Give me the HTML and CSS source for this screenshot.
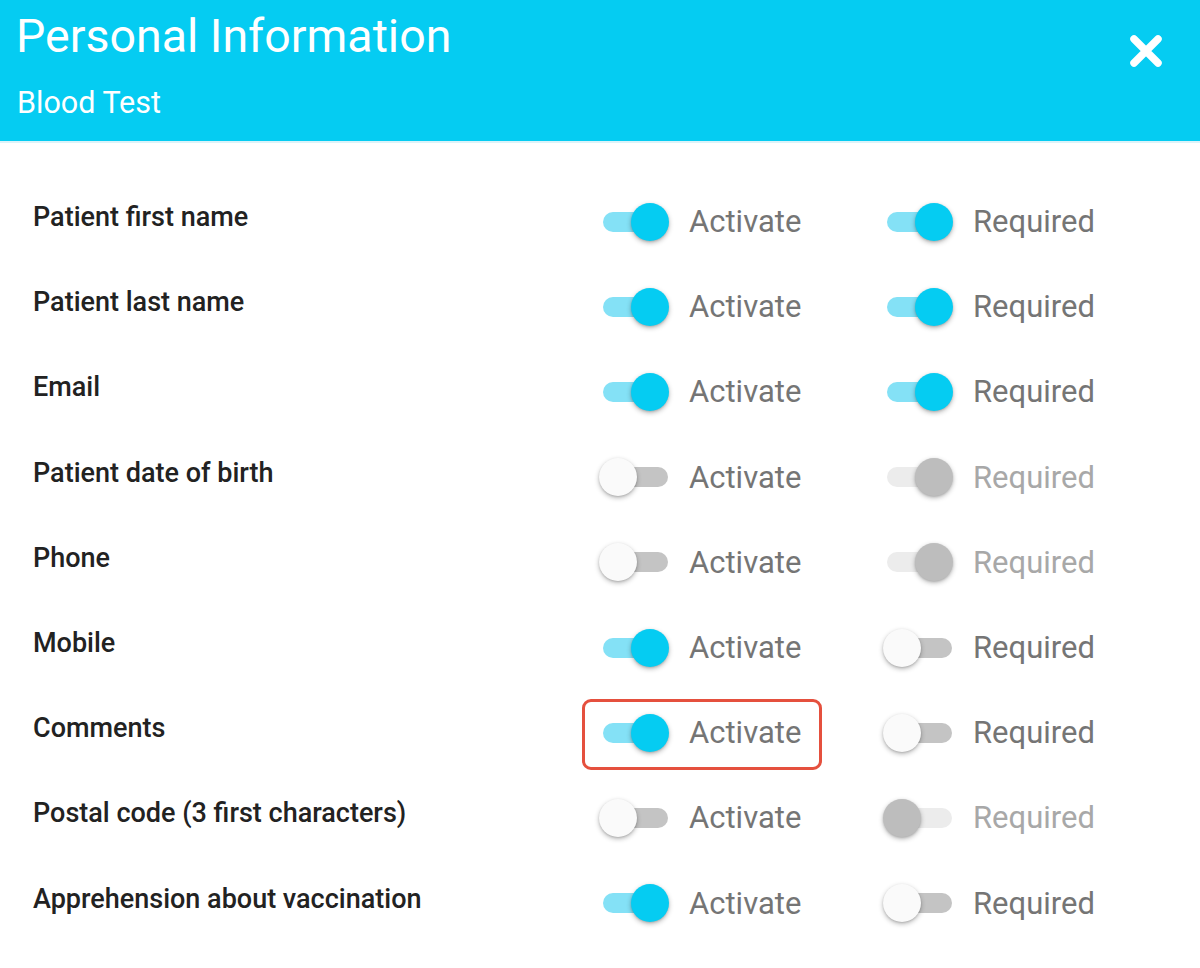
FILE: index.html
```html
<!DOCTYPE html>
<html>
<head>
<meta charset="utf-8">
<link rel="stylesheet" href="styles.css">
</head>
<body>
<header class="header">
  <div class="titles">
    <h1 class="title">Personal Information</h1>
    <div class="subtitle">Blood Test</div>
  </div>
  <button class="close" aria-label="Close">
    <svg width="34" height="34" viewBox="0 0 34 34"><path d="M5 5 L29 29 M29 5 L5 29" stroke="#fff" stroke-width="7.5" stroke-linecap="round"/></svg>
  </button>
</header>
<main class="list">
  <div class="row">
    <div class="label">Patient first name</div>
    <div class="opt"><span class="switch on"><span class="track"></span><span class="knob"></span></span><span class="opt-text">Activate</span></div>
    <div class="opt"><span class="switch on"><span class="track"></span><span class="knob"></span></span><span class="opt-text">Required</span></div>
  </div>
  <div class="row">
    <div class="label">Patient last name</div>
    <div class="opt"><span class="switch on"><span class="track"></span><span class="knob"></span></span><span class="opt-text">Activate</span></div>
    <div class="opt"><span class="switch on"><span class="track"></span><span class="knob"></span></span><span class="opt-text">Required</span></div>
  </div>
  <div class="row">
    <div class="label">Email</div>
    <div class="opt"><span class="switch on"><span class="track"></span><span class="knob"></span></span><span class="opt-text">Activate</span></div>
    <div class="opt"><span class="switch on"><span class="track"></span><span class="knob"></span></span><span class="opt-text">Required</span></div>
  </div>
  <div class="row">
    <div class="label">Patient date of birth</div>
    <div class="opt"><span class="switch"><span class="track"></span><span class="knob"></span></span><span class="opt-text">Activate</span></div>
    <div class="opt disabled"><span class="switch on"><span class="track"></span><span class="knob"></span></span><span class="opt-text">Required</span></div>
  </div>
  <div class="row">
    <div class="label">Phone</div>
    <div class="opt"><span class="switch"><span class="track"></span><span class="knob"></span></span><span class="opt-text">Activate</span></div>
    <div class="opt disabled"><span class="switch on"><span class="track"></span><span class="knob"></span></span><span class="opt-text">Required</span></div>
  </div>
  <div class="row">
    <div class="label">Mobile</div>
    <div class="opt"><span class="switch on"><span class="track"></span><span class="knob"></span></span><span class="opt-text">Activate</span></div>
    <div class="opt"><span class="switch"><span class="track"></span><span class="knob"></span></span><span class="opt-text">Required</span></div>
  </div>
  <div class="row">
    <div class="label">Comments</div>
    <div class="opt highlighted"><span class="switch on"><span class="track"></span><span class="knob"></span></span><span class="opt-text">Activate</span></div>
    <div class="opt"><span class="switch"><span class="track"></span><span class="knob"></span></span><span class="opt-text">Required</span></div>
  </div>
  <div class="row">
    <div class="label">Postal code (3 first characters)</div>
    <div class="opt"><span class="switch"><span class="track"></span><span class="knob"></span></span><span class="opt-text">Activate</span></div>
    <div class="opt disabled"><span class="switch"><span class="track"></span><span class="knob"></span></span><span class="opt-text">Required</span></div>
  </div>
  <div class="row">
    <div class="label">Apprehension about vaccination</div>
    <div class="opt"><span class="switch on"><span class="track"></span><span class="knob"></span></span><span class="opt-text">Activate</span></div>
    <div class="opt"><span class="switch"><span class="track"></span><span class="knob"></span></span><span class="opt-text">Required</span></div>
  </div>
</main>
</body>
</html>
```
FILE: styles.css
```css
* { box-sizing: border-box; }
html, body { margin: 0; padding: 0; background: #fff; }
body { font-family: Roboto, "Liberation Sans", sans-serif; }

.header {
  height: 143px;
  background: #05ccf2;
  border-bottom: 2px solid #dcf3f9;
  display: flex;
  justify-content: space-between;
  align-items: flex-start;
  padding: 13px 0 0 16px;
}
.title {
  margin: 0;
  font-size: 46.5px;
  line-height: 46px;
  font-weight: 400;
  color: #fff;
}
.subtitle {
  margin-top: 29px;
  padding-left: 1px;
  font-size: 30.5px;
  line-height: 30px;
  color: #fff;
}
.close {
  background: none;
  border: 0;
  padding: 0;
  margin: 21px 37px 0 0;
  width: 34px;
  height: 34px;
  cursor: pointer;
}
.close svg { display: block; }

.list {
  padding: 36px 0 0 33px;
}
.row {
  height: 85.2px;
  display: grid;
  grid-template-columns: 566px 284px auto;
  align-items: center;
}
.label {
  font-size: 27px;
  line-height: 27px;
  font-weight: 500;
  color: #222;
  padding-bottom: 8px;
}
.opt {
  display: flex;
  align-items: center;
  gap: 20px;
  position: relative;
  justify-self: start;
}
.opt-text {
  font-size: 31px;
  line-height: 31px;
  color: #757575;
}
.switch {
  position: relative;
  width: 70px;
  height: 38px;
  flex: none;
}
.track {
  position: absolute;
  left: 4px;
  top: 9px;
  width: 65px;
  height: 20px;
  border-radius: 10px;
  background: #c4c4c4;
}
.knob {
  position: absolute;
  left: 0;
  top: 0;
  width: 38px;
  height: 38px;
  border-radius: 50%;
  background: #fafafa;
  box-shadow: 0 2px 5px rgba(0,0,0,0.28), 0 1px 2px rgba(0,0,0,0.12);
}
.switch.on .knob { left: 32px; background: #05ccf2; }
.switch.on .track { background: #84e1f6; }

.disabled .opt-text { color: #a8a8a8; }
.disabled .switch .track { background: #ececec; }
.disabled .switch .knob { background: #bdbdbd; }

.highlighted::after {
  content: "";
  position: absolute;
  left: -17px;
  right: -21px;
  top: -15px;
  bottom: -18px;
  border: 3px solid #e5503e;
  border-radius: 9px;
  pointer-events: none;
}
```
